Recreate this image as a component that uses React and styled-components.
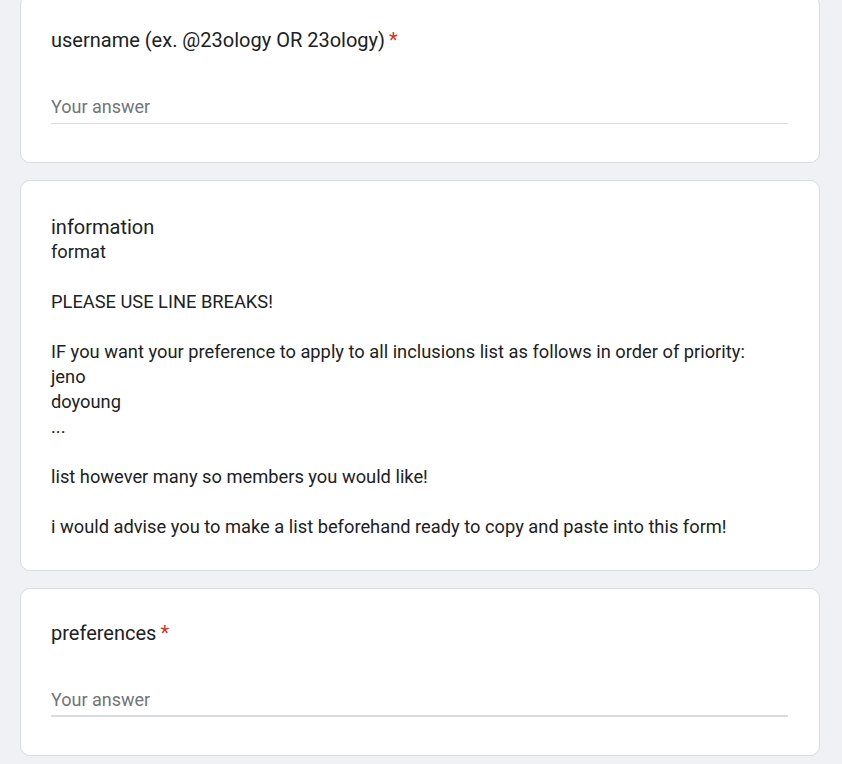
import React from "react";
import styled, { createGlobalStyle } from "styled-components";

const Global = createGlobalStyle`
  html, body {
    margin: 0;
    padding: 0;
    background: #f0f1f4;
    font-family: Roboto, "Liberation Sans", Arial, sans-serif;
    color: #202124;
  }
  * { box-sizing: border-box; }
`;

const Page = styled.div`
  width: 800px;
  margin: -5px 0 0 20px;
  display: flex;
  flex-direction: column;
  gap: 17px;
  padding-bottom: 20px;
`;

const Card = styled.section`
  background: #fff;
  border: 1px solid #dadce0;
  border-radius: 10px;
  padding: ${(p) => (p.$desc ? "31px 30px 31px" : "29px 30px 38px")};
`;

const Title = styled.div`
  font-size: 20px;
  line-height: 30px;
  color: #202124;
`;

const Required = styled.span`
  color: #d93025;
  margin-left: 4px;
`;

const Description = styled.div`
  margin-top: -3px;
  font-size: 18.3px;
  line-height: 25px;
  color: #202124;
  white-space: pre-wrap;
`;

const Field = styled.div`
  margin-top: 33px;
  width: 737px;
`;

const Input = styled.input`
  display: block;
  width: 100%;
  height: 36px;
  border: none;
  border-bottom: 1px solid #dadce0;
  box-shadow: ${(p) => (p.$thick ? "inset 0 -1px 0 #dadce0" : "none")};
  outline: none;
  padding: 2px 0 0 0;
  font-family: Roboto, "Liberation Sans", Arial, sans-serif;
  font-size: 18px;
  color: #202124;
  background: transparent;
  &::placeholder {
    color: #70757a;
  }
`;

const descText = `format

PLEASE USE LINE BREAKS!

IF you want your preference to apply to all inclusions list as follows in order of priority:
jeno
doyoung
...

list however many so members you would like!

i would advise you to make a list beforehand ready to copy and paste into this form!`;

function Question({ title, thick }) {
  return (
    <Card>
      <Title>
        {title}
        <Required>*</Required>
      </Title>
      <Field>
        <Input placeholder="Your answer" $thick={thick} />
      </Field>
    </Card>
  );
}

export default function App() {
  return (
    <>
      <Global />
      <Page>
        <Question title="username (ex. @23ology OR 23ology)" />
        <Card $desc>
          <Title>information</Title>
          <Description>{descText}</Description>
        </Card>
        <Question title="preferences" thick />
      </Page>
    </>
  );
}
